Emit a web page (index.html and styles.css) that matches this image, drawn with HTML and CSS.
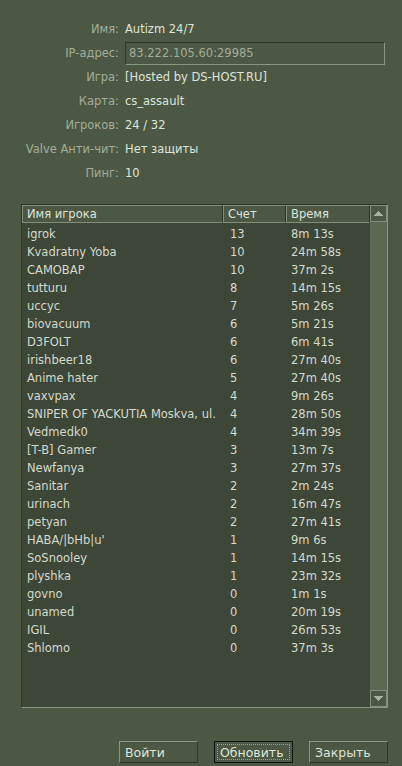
FILE: index.html
```html
<!DOCTYPE html>
<html>
<head>
<meta charset="utf-8">
<link rel="stylesheet" href="styles.css">
</head>
<body>
<div class="dialog">
  <div class="info">
    <div class="irow"><span class="lbl">Имя:</span><span class="val">Autizm 24/7</span></div>
    <div class="irow"><span class="lbl">IP-адрес:</span><span class="ipbox">83.222.105.60:29985</span></div>
    <div class="irow"><span class="lbl">Игра:</span><span class="val">[Hosted by DS-HOST.RU]</span></div>
    <div class="irow"><span class="lbl">Карта:</span><span class="val">cs_assault</span></div>
    <div class="irow"><span class="lbl">Игроков:</span><span class="val">24 / 32</span></div>
    <div class="irow"><span class="lbl">Valve Анти-чит:</span><span class="val">Нет защиты</span></div>
    <div class="irow"><span class="lbl">Пинг:</span><span class="val">10</span></div>
  </div>

  <div class="list">
    <div class="main">
      <div class="head">
        <div class="hc c1">Имя игрока</div>
        <div class="hc c2">Счет</div>
        <div class="hc c3">Время</div>
      </div>
      <div class="rows" id="rows"></div>
    </div>
    <div class="sb">
      <div class="sbtn"><svg width="9" height="5" viewBox="0 0 9 5"><path d="M4 0h1v1h1v1h1v1h1v1h1v1H0V4h1V3h1V2h1V1h1z" fill="#a9b49c"/></svg></div>
      <div class="track"></div>
      <div class="sbtn"><svg width="9" height="5" viewBox="0 0 9 5"><path d="M0 0h9v1H8v1H7v1H6v1H5v1H4V4H3V3H2V2H1V1H0z" fill="#a9b49c"/></svg></div>
    </div>
  </div>

  <div class="buttons">
    <div class="btn">Войти</div>
    <div class="btn def"><span>Обновить</span></div>
    <div class="btn">Закрыть</div>
  </div>
</div>
<script src="app.js"></script>
</body>
</html>
```
FILE: app.js
```js
var data = [
["igrok","13","8m 13s"],
["Kvadratny Yoba","10","24m 58s"],
["CAMOBAP","10","37m 2s"],
["tutturu","8","14m 15s"],
["uccyc","7","5m 26s"],
["biovacuum","6","5m 21s"],
["D3FOLT","6","6m 41s"],
["irishbeer18","6","27m 40s"],
["Anime hater","5","27m 40s"],
["vaxvpax","4","9m 26s"],
["SNIPER OF YACKUTIA Moskva, ul.","4","28m 50s"],
["Vedmedk0","4","34m 39s"],
["[T-B] Gamer","3","13m 7s"],
["Newfanya","3","27m 37s"],
["Sanitar","2","2m 24s"],
["urinach","2","16m 47s"],
["petyan","2","27m 41s"],
["HABA/|bHb|u'","1","9m 6s"],
["SoSnooley","1","14m 15s"],
["plyshka","1","23m 32s"],
["govno","0","1m 1s"],
["unamed","0","20m 19s"],
["IGIL","0","26m 53s"],
["Shlomo","0","37m 3s"]
];
var rows = document.getElementById('rows');
data.forEach(function (d) {
  var r = document.createElement('div');
  r.className = 'row';
  r.innerHTML = '<span class="d1"></span><span class="d2"></span><span class="d3"></span>';
  r.children[0].textContent = d[0];
  r.children[1].textContent = d[1];
  r.children[2].textContent = d[2];
  rows.appendChild(r);
});
```
FILE: styles.css
```css
html, body {
  margin: 0;
  padding: 0;
  background: #4c5844;
}
body {
  font-family: "DejaVu Sans", Verdana, sans-serif;
  font-size: 11.5px;
  color: #d8ded3;
  width: 402px;
  height: 766px;
  overflow: hidden;
}
.dialog {
  padding: 17px 0 0 0;
}
.info {
  display: flex;
  flex-direction: column;
}
.irow {
  display: flex;
  align-items: center;
  height: 24px;
}
.lbl {
  width: 125px;
  text-align: right;
  color: #a3ad98;
  padding-right: 6px;
  box-sizing: border-box;
  flex: none;
}
.val {
  color: #dfe4da;
}
.ipbox {
  width: 260px;
  height: 23px;
  box-sizing: border-box;
  border: 1px solid;
  border-color: #2f3629 #8b9880 #8b9880 #2f3629;
  background: #4c5844;
  color: #a3ad98;
  padding-left: 3px;
  display: flex;
  align-items: center;
}
.list {
  margin: 19px 0 0 21px;
  width: 367px;
  height: 504px;
  box-sizing: border-box;
  border: 1px solid;
  border-color: #2f3629 #8b9880 #8b9880 #2f3629;
  background: #3e4637;
  display: flex;
}
.main {
  flex: 1;
  display: flex;
  flex-direction: column;
}
.head {
  display: flex;
  height: 18px;
  background: #4c5844;
}
.hc {
  box-sizing: border-box;
  height: 18px;
  border: 1px solid #848f79;
  border-right-color: #2f3629;
  padding-left: 4px;
  display: flex;
  align-items: center;
  color: #dfe4da;
}
.c1 { width: 201px; }
.c2 { width: 63px; }
.c3 { width: 84px; }
.rows {
  padding-top: 2px;
}
.row {
  display: flex;
  height: 18px;
  align-items: center;
  color: #d4dacd;
}
.d1 { width: 201px; padding-left: 5px; box-sizing: border-box; white-space: nowrap; overflow: hidden; }
.d2 { width: 63px; padding-left: 7px; box-sizing: border-box; }
.d3 { width: 84px; padding-left: 5px; box-sizing: border-box; }
.sb {
  width: 17px;
  display: flex;
  flex-direction: column;
  background: #5a6a50;
}
.sbtn {
  height: 17px;
  box-sizing: border-box;
  border: 1px solid #848f79;
  background: #4c5844;
  display: flex;
  align-items: center;
  justify-content: center;
}
.track {
  flex: 1;
}
.buttons {
  display: flex;
  justify-content: flex-end;
  gap: 16px;
  margin: 33px 14px 0 0;
}
.btn {
  width: 79px;
  height: 22px;
  box-sizing: border-box;
  border: 1px solid;
  border-color: #8b9880 #2f3629 #2f3629 #8b9880;
  padding-left: 5px;
  display: flex;
  align-items: center;
  color: #dfe4da;
  font-size: 12.5px;
}
.btn.def {
  border: 1px solid #111410;
  padding: 2px;
}
.btn.def span {
  flex: 1;
  height: 100%;
  box-sizing: border-box;
  border: 1px dotted #9aa58f;
  display: flex;
  align-items: center;
  padding-left: 2px;
}
```
